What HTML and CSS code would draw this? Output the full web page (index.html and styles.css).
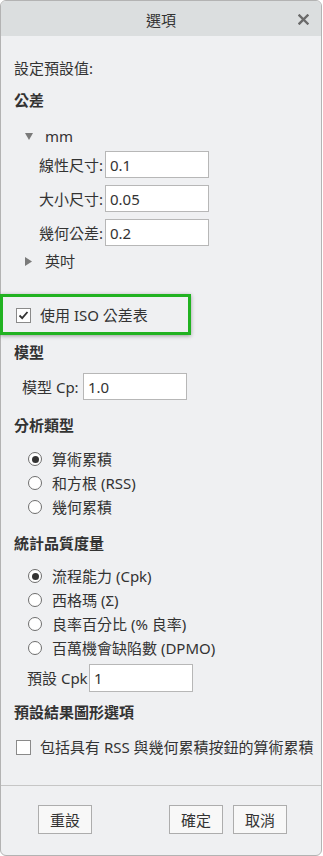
FILE: index.html
```html
<!DOCTYPE html>
<html lang="zh-Hant">
<head>
<meta charset="utf-8">
<title>選項</title>
<link rel="stylesheet" href="styles.css">
</head>
<body>
<div class="dialog">
  <div class="titlebar">
    <span class="title">選項</span>
    <span class="close"><svg width="11" height="11" viewBox="0 0 11 11"><path d="M1.5 1.5 L9.5 9.5 M9.5 1.5 L1.5 9.5" stroke="#6a6a6a" stroke-width="2.4" stroke-linecap="square"/></svg></span>
  </div>
  <div class="content">
    <div class="row">設定預設值:</div>
    <div class="row heading mt8">公差</div>
    <div class="row tree mt12"><span class="tri"><svg width="8" height="7" viewBox="0 0 8 7"><polygon points="0,0 8,0 4,7" fill="#7a7a7a"/></svg></span><span class="tree-text">mm</span></div>
    <div class="fields">
      <div class="field"><span class="flabel">線性尺寸:</span><span class="input">0.1</span></div>
      <div class="field"><span class="flabel">大小尺寸:</span><span class="input">0.05</span></div>
      <div class="field"><span class="flabel">幾何公差:</span><span class="input">0.2</span></div>
    </div>
    <div class="row tree mt3"><span class="tri"><svg width="8" height="9" viewBox="0 0 8 9"><polygon points="0,0 7,4.5 0,9" fill="#7a7a7a"/></svg></span><span class="tree-text">英吋</span></div>
    <div class="highlight">
      <span class="checkbox"><svg width="13" height="13" viewBox="0 0 13 13"><path d="M2.5 6.5 L5.2 9.2 L10.5 3" fill="none" stroke="#333" stroke-width="1.8"/></svg></span>
      <span class="check-text">使用 ISO 公差表</span>
    </div>
    <div class="row heading mt5">模型</div>
    <div class="field cp mt9"><span class="flabel">模型 Cp:</span><span class="input">1.0</span></div>
    <div class="row heading mt13">分析類型</div>
    <div class="radios mt10">
      <div class="radio-row"><span class="radio on"></span><span>算術累積</span></div>
      <div class="radio-row"><span class="radio"></span><span>和方根 (RSS)</span></div>
      <div class="radio-row"><span class="radio"></span><span>幾何累積</span></div>
    </div>
    <div class="row heading mt12">統計品質度量</div>
    <div class="radios mt9">
      <div class="radio-row"><span class="radio on"></span><span>流程能力 (Cpk)</span></div>
      <div class="radio-row"><span class="radio"></span><span>西格瑪 (Σ)</span></div>
      <div class="radio-row"><span class="radio"></span><span>良率百分比 (% 良率)</span></div>
      <div class="radio-row"><span class="radio"></span><span>百萬機會缺陷數 (DPMO)</span></div>
    </div>
    <div class="field cpk mt4"><span class="flabel">預設 Cpk</span><span class="input">1</span></div>
    <div class="row heading mt8">預設結果圖形選項</div>
    <div class="row check-row mt11">
      <span class="checkbox"></span>
      <span class="check-text">包括具有 RSS 與幾何累積按鈕的算術累積</span>
    </div>
  </div>
  <div class="footer">
    <span class="btn">重設</span>
    <span class="btn ok">確定</span>
    <span class="btn cancel">取消</span>
  </div>
</div>
</body>
</html>
```

FILE: styles.css
```css
* { box-sizing: border-box; }
html, body { margin: 0; padding: 0; background: #ffffff; }
body {
  font-family: "Noto Sans", "Noto Sans CJK TC", sans-serif;
  font-size: 15px;
  color: #333333;
}
.dialog {
  width: 322px;
  height: 856px;
  border: 1px solid #b3b3b3;
  border-radius: 6px;
  background: #eff0f2;
  display: flex;
  flex-direction: column;
  overflow: visible;
}
.titlebar {
  height: 35px;
  flex: none;
  background: #dbdedf;
  border-radius: 5px 5px 0 0;
  display: grid;
  grid-template-columns: 1fr auto 1fr;
  align-items: center;
  padding-top: 3px;
}
.title {
  grid-column: 2;
  font-size: 15px;
  line-height: 20px;
  color: #333;
}
.close {
  grid-column: 3;
  justify-self: end;
  margin-right: 12px;
  display: flex;
  margin-top: -1px;
}
.content {
  flex: 1;
  padding: 20px 0 0 13px;
}
.row {
  height: 24px;
  display: flex;
  align-items: center;
  line-height: 20px;
  white-space: nowrap;
}
.heading { font-weight: 700; }
.mt3 { margin-top: 3px; }
.mt4 { margin-top: 4px; }
.mt5 { margin-top: 5px; }
.mt8 { margin-top: 8px; }
.mt9 { margin-top: 9px; }
.mt10 { margin-top: 10px; }
.mt11 { margin-top: 11px; }
.mt12 { margin-top: 12px; }
.mt13 { margin-top: 13px; }
.tree { padding-left: 11px; }
.tri { width: 8px; display: flex; align-items: center; }
.tree-text { margin-left: 12px; }
.fields {
  margin-top: 3px;
  display: flex;
  flex-direction: column;
  gap: 7px;
}
.field {
  height: 27px;
  display: flex;
  align-items: center;
  padding-left: 25px;
  white-space: nowrap;
  line-height: 20px;
}
.flabel { width: 66px; flex: none; }
.input {
  width: 104px;
  height: 27px;
  background: #ffffff;
  border: 1px solid #b7b7b7;
  padding-left: 4px;
  display: flex;
  align-items: center;
  color: #333;
}
.field.cp { padding-left: 8px; }
.field.cp .flabel { width: 61px; }
.field.cpk { padding-left: 13px; height: 28px; }
.field.cpk .flabel { width: 62px; }
.field.cpk .input { height: 28px; }
.highlight {
  margin-top: 21px;
  margin-left: -14px;
  width: 191px;
  height: 41px;
  border: 3px solid #21b221;
  box-shadow: 0 1px 4px rgba(0, 0, 0, 0.35);
  display: flex;
  align-items: center;
  padding-left: 13px;
  padding-top: 1px;
  white-space: nowrap;
  line-height: 20px;
}
.checkbox {
  width: 15px;
  height: 15px;
  flex: none;
  background: #ffffff;
  border: 1px solid #8a8a8a;
  display: flex;
  align-items: center;
  justify-content: center;
}
.check-text { margin-left: 9px; }
.check-row { padding-left: 2px; }
.radios { display: flex; flex-direction: column; }
.radio-row {
  height: 24px;
  display: flex;
  align-items: center;
  padding-left: 14px;
  line-height: 20px;
  white-space: nowrap;
}
.radio {
  width: 14px;
  height: 14px;
  flex: none;
  border-radius: 50%;
  border: 1.5px solid #6e6e6e;
  background: #ffffff;
  margin-right: 10px;
  display: flex;
  align-items: center;
  justify-content: center;
}
.radio.on::after {
  content: "";
  width: 7px;
  height: 7px;
  border-radius: 50%;
  background: #333333;
}
.footer {
  flex: none;
  height: 70px;
  border-top: 1px solid #c6c6c6;
  padding: 19px 34px 0 37px;
  display: flex;
  align-items: flex-start;
}
.btn {
  width: 54px;
  height: 29px;
  background: #f8f8f8;
  border: 1px solid #adadad;
  display: flex;
  align-items: center;
  justify-content: center;
  line-height: 20px;
  color: #333;
}
.btn.ok { margin-left: auto; }
.btn.cancel { margin-left: 10px; }
```
